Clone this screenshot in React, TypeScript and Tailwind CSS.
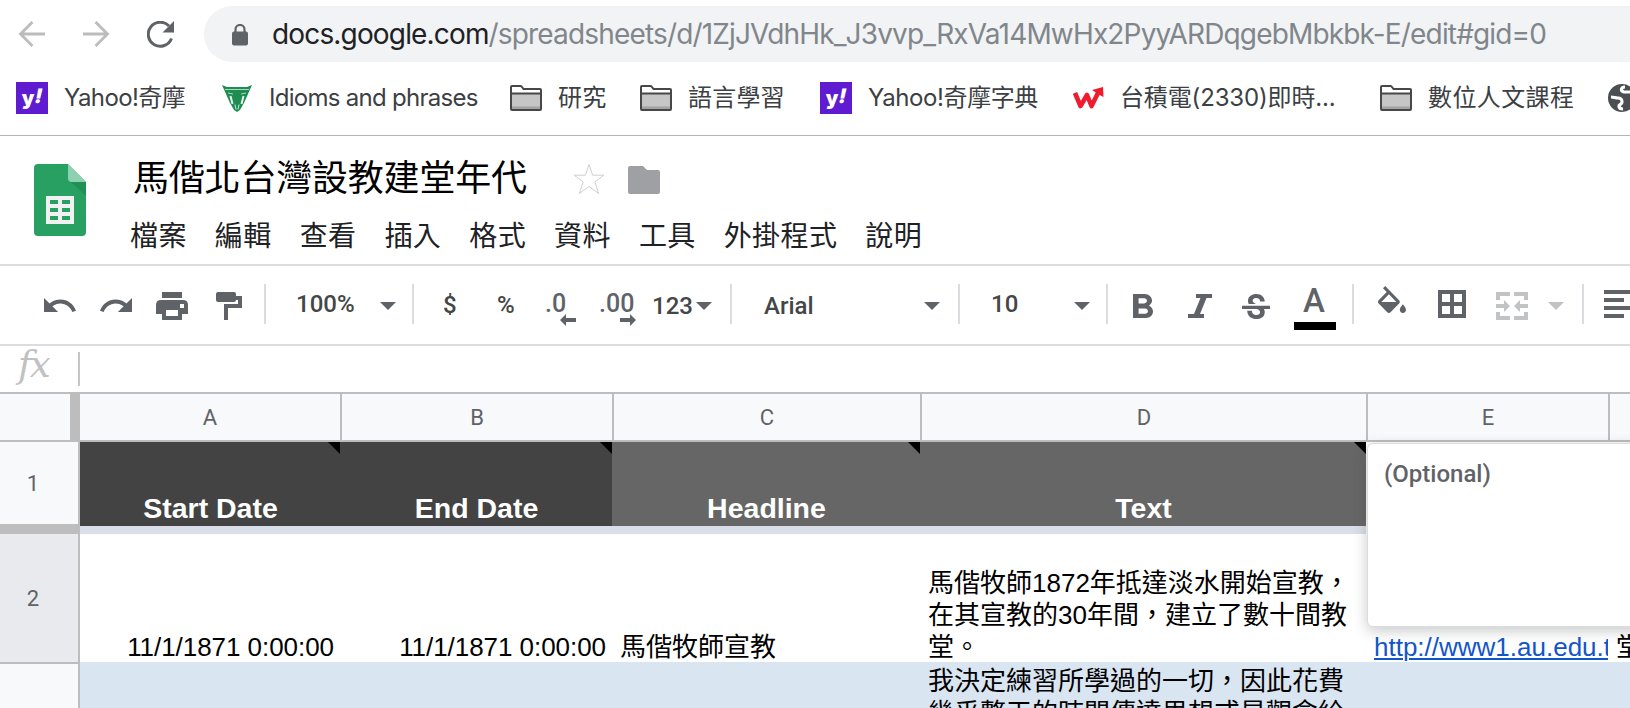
import type { ReactNode } from "react";
import { MdFormatBold, MdStrikethroughS } from "react-icons/md";

const menus = ["檔案", "編輯", "查看", "插入", "格式", "資料", "工具", "外掛程式", "說明"];

export default function App() {

    return <div className="h-[708px] w-[1630px] overflow-hidden bg-white flex flex-col font-['Roboto','Noto_Sans_CJK_TC',sans-serif]" lang="zh-Hant">
        <AddressBar />
        <Bookmarks />
        <DocHeader />
        <Toolbar />
        <FormulaBar />
        <Sheet />
    </div>
}

function AddressBar() {

    return <div className="flex h-[68px] shrink-0 pt-1.5 pl-[18px]">
        <svg className="mt-[14px] h-7 w-7 shrink-0" viewBox="0 0 28 28" fill="none" stroke="#bbbcbe" strokeWidth="2.8">
            <path d="M27 14H3M14.500 2 2.500 14 14.500 26" />
        </svg>
        <svg className="ml-9 mt-[14px] h-7 w-7 shrink-0" viewBox="0 0 28 28" fill="none" stroke="#bbbcbe" strokeWidth="2.8">
            <path d="M1 14h24M13.500 2l12 12-12 12" />
        </svg>
        <svg className="ml-[37px] mt-[15px] h-[27px] w-7 shrink-0" viewBox="0 0 28 27">
            <path d="M24.500 17.500A12 12 0 1 1 22 5" fill="none" stroke="#5f6368" strokeWidth="3" />
            <path d="M27 0v11.500H15.500z" fill="#5f6368" />
        </svg>
        <div className="ml-[29px] flex h-14 w-[1460px] shrink-0 rounded-l-full bg-[#f1f3f4] pl-7">
            <svg className="mt-[18px] h-[23px] w-4 shrink-0" viewBox="0 0 16 23">
                <path d="M3.500 9V5.500a4.500 4.500 0 0 1 9 0V9" fill="none" stroke="#5f6368" strokeWidth="2.200" />
                <rect y="7.500" width="16" height="14" rx="2" fill="#5f6368" />
            </svg>
            <span className="ml-6 whitespace-nowrap font-['Inter'] text-[28px] leading-[57px] tracking-[-0.84px] text-[#202124]">
                docs.google.com<span className="text-[#80868b]">/spreadsheets/d/1ZjJVdhHk_J3vvp_RxVa14MwHx2PyyARDqgebMbkbk-E/edit#gid=0</span>
            </span>
        </div>
    </div>
}

function Bookmarks() {

    return <div className="flex h-[68px] shrink-0 items-start border-b border-[#b4b4b4] pl-4 pt-3.5">
        <Bookmark className="w-[205px] tracking-[-0.6px]" icon={<YahooIcon />} label="Yahoo!奇摩" />
        <Bookmark className="w-[289px] tracking-[-0.72px]" icon={<CrestIcon />} label="Idioms and phrases" />
        <Bookmark className="w-[130px] tracking-[0.3px]" icon={<FolderIcon />} label="研究" />
        <Bookmark className="w-[180px] tracking-[0.2px]" icon={<FolderIcon />} label="語言學習" />
        <Bookmark className="w-[252px] tracking-[-0.4px]" icon={<YahooIcon />} label="Yahoo!奇摩字典" />
        <Bookmark className="w-[308px] tracking-[-0.15px]" icon={<WantgooIcon />} label="台積電(2330)即時..." />
        <Bookmark className="w-[228px] tracking-[0.4px]" icon={<FolderIcon />} label="數位人文課程" />
        <svg className="mt-0.5 h-7 w-7 shrink-0" viewBox="0 0 28 28">
            <circle cx="14" cy="14" r="14" fill="#4b4f54" />
            <path d="M3 13c3 0 4 1 7 1s4 1 4 4-3 2-3 4 1 3 4 3M17 3c-4 0-5 4-1 5l6 0" fill="none" stroke="#fff" strokeWidth="3.200" />
        </svg>
    </div>
}

function Bookmark({ icon, label, className }:{ icon:ReactNode, label:string, className:string }) {

    return <div className={`flex shrink-0 ${className}`}>
        <span className="flex h-8 w-8 shrink-0 items-center justify-center">{icon}</span>
        <span className="ml-4 whitespace-nowrap font-['Inter','Noto_Sans_CJK_TC'] text-2xl leading-8 text-[#3c4043]">{label}</span>
    </div>
}

function YahooIcon() {

    return <span className="flex h-8 w-8 items-center justify-center bg-[#5f1bd0] font-['Inter'] text-xl font-black leading-none tracking-normal text-white">
        <span>y</span>
        <span className="-mt-1 -skew-x-12">!</span>
    </span>
}

function CrestIcon() {

    return <svg className="-ml-px h-[27px] w-[30px]" viewBox="0 0 30 27">
        <path d="M0 0l5 2h20l5-2-4 9-4 9-4 7-3 2-3-2-4-7-4-9z" fill="#1f8c52" />
        <path d="M3 4.500l24 0M6 8l5 1M24 8l-5 1" stroke="#a9d8be" strokeWidth="1" fill="none" />
        <path d="M8.500 11l2 8M21.500 11l-2 8" stroke="#e6f4ec" strokeWidth="2" fill="none" />
        <path d="M13 19.500l1 5M17 19.500l-1 5" stroke="#b5dcc7" strokeWidth="1.200" />
    </svg>
}

function FolderIcon() {

    return <svg className="h-[26px] w-8" viewBox="0 0 32 26">
        <path d="M1 24V2q0-1 1-1h8.500q1 0 1.500 1l1.500 2H30q1 0 1 1v19q0 1-1 1H2q-1 0-1-1z" fill="#fff" stroke="#474747" strokeWidth="2" />
        <path d="M2 9h28v15H2z" fill="#c6c6c6" />
        <path d="M2 21.500h28V24H2z" fill="#a3a3a3" />
        <path d="M1 8.500h30" stroke="#474747" strokeWidth="2" />
    </svg>
}

function WantgooIcon() {

    return <svg className="h-[22px] w-[31px]" viewBox="0 0 31 22">
        <path d="M2 6l5.500 13L14 8l4.500 11L26 4" fill="none" stroke="#ee1c2e" strokeWidth="4.600" strokeLinejoin="round" />
        <path d="M19 3l11-3 .5 10-4-2z" fill="#ee1c2e" />
    </svg>
}

function DocHeader() {

    return <div className="flex h-[130px] shrink-0 border-b-2 border-[#dadce0] pl-[34px]">
        <svg className="mt-7 h-[72px] w-[52px] shrink-0" viewBox="0 0 52 72">
            <path d="M4 0h30l18 18v50q0 4-4 4H4q-4 0-4-4V4q0-4 4-4z" fill="#28a062" />
            <path d="M37 18h15v14z" fill="#219055" />
            <path d="M34 0l18 18H38q-4 0-4-4z" fill="#8ed1b1" />
            <path d="M12 32h28v28H12z" fill="#f1f1f1" />
            <path d="M16 36h8v4h-8zm12 0h8v4h-8zM16 44h8v4h-8zm12 0h8v4h-8zM16 52h8v4h-8zm12 0h8v4h-8z" fill="#28a062" />
        </svg>
        <div className="ml-11 flex flex-col">
            <div className="flex h-[74px] pl-[3px]">
                <span className="mt-[19px] w-[440px] whitespace-nowrap text-[36px] leading-[48px] tracking-[-0.2px] text-black">馬偕北台灣設教建堂年代</span>
                <svg className="mt-[27px] h-8 w-8" viewBox="0 0 32 32" fill="none" stroke="#cfcfcf" strokeWidth="1">
                    <path d="M16 1.500l3.600 10.700h11.300l-9.100 6.700 3.900 11.600L16 23.500l-9.700 7 3.900-11.600-9.100-6.700h11.300z" />
                </svg>
                <svg className="ml-[23px] mt-[30px] h-7 w-8" viewBox="0 0 32 28">
                    <path d="M2 0h13l4 4h11q2 0 2 2v20q0 2-2 2H2q-2 0-2-2V2q0-2 2-2z" fill="#9fa0a4" />
                </svg>
            </div>
            <div className="flex gap-7 text-[28px] leading-[54px] tracking-[0.4px] text-[#202124]">
                {menus.map((menu) => <span key={menu} className="whitespace-nowrap pt-px">{menu}</span>)}
            </div>
        </div>
    </div>
}

function Caret({ className }:{ className:string }) {

    return <svg className={`mt-9 h-2 w-4 shrink-0 ${className}`} viewBox="0 0 16 8" fill="currentColor">
        <path d="M0 0h16L8 8z" />
    </svg>
}

function Divider({ className }:{ className:string }) {

    return <span className={`mt-[18px] h-10 w-0.5 shrink-0 bg-[#dadce0] ${className}`} />
}

function Toolbar() {

    return <div className="flex h-20 shrink-0 items-start overflow-hidden whitespace-nowrap border-b-2 border-[#dadce0] pl-11 text-2xl font-medium leading-[34px] text-[#5f6368]">
        <svg className="mt-8 h-[14px] w-8 shrink-0" viewBox="2 7 20.470 9" preserveAspectRatio="none" fill="currentColor">
            <path d="M12.500 8c-2.650 0-5.050.99-6.900 2.600L2 7v9h9l-3.620-3.620c1.390-1.160 3.160-1.880 5.120-1.880 3.540 0 6.550 2.310 7.600 5.500l2.370-.78C21.080 11.030 17.150 8 12.500 8z" />
        </svg>
        <svg className="ml-6 mt-8 h-[14px] w-8 shrink-0 -scale-x-100" viewBox="2 7 20.470 9" preserveAspectRatio="none" fill="currentColor">
            <path d="M12.500 8c-2.650 0-5.050.99-6.900 2.600L2 7v9h9l-3.620-3.620c1.390-1.160 3.160-1.880 5.120-1.880 3.540 0 6.550 2.310 7.600 5.500l2.370-.78C21.080 11.030 17.150 8 12.500 8z" />
        </svg>
        <svg className="ml-6 mt-[26px] h-7 w-8 shrink-0" viewBox="0 0 32 28" fill="currentColor" fillRule="evenodd">
            <path d="M6 0h20v6H6zM5 8h22q5 0 5 5v9h-6v6H6v-6H0v-9q0-5 5-5zm5 10v6h12v-6zm14-6v4h4v-4z" />
        </svg>
        <svg className="ml-7 mt-[26px] h-7 w-[26px] shrink-0" viewBox="0 0 26 28" fill="currentColor">
            <path d="M2 0h16q2 0 2 2v2h6v12H12v12H8V12h14V8h-2q0 2-2 2H2q-2 0-2-2V2q0-2 2-2z" />
        </svg>
        <Divider className="ml-[22px]" />
        <span className="ml-[30px] mt-[21px] w-[84px] shrink-0 text-[#444746]">100%</span>
        <Caret className="" />
        <Divider className="ml-4" />
        <span className="ml-[29px] mt-[22px] w-[54px] shrink-0 text-[#444746]">$</span>
        <span className="mt-[22px] w-12 shrink-0 text-[#444746]">%</span>
        <span className="flex h-[60px] w-[54px] shrink-0 flex-col pt-[21px]">
            <span className="h-[27px] text-[25px]">.0</span>
            <svg className="ml-[15px] h-3 w-4" viewBox="0 0 16 12" fill="currentColor"><path d="M0 6l6-6v4h10v4H6v4z" /></svg>
        </span>
        <span className="flex h-[60px] w-[53px] shrink-0 flex-col pt-[21px]">
            <span className="h-[27px] text-[25px]">.00</span>
            <svg className="ml-[21px] h-3 w-4" viewBox="0 0 16 12" fill="currentColor"><path d="M16 6l-6-6v4H0v4h10v4z" /></svg>
        </span>
        <span className="mt-[23px] w-11 shrink-0 text-[#444746]">123</span>
        <Caret className="" />
        <Divider className="ml-[18px]" />
        <span className="ml-8 mt-[23px] w-[160px] shrink-0 text-[#444746]">Arial</span>
        <Caret className="" />
        <Divider className="ml-[18px]" />
        <span className="ml-[31px] mt-[21px] w-[83px] shrink-0 text-[#444746]">10</span>
        <Caret className="" />
        <Divider className="ml-4" />
        <MdFormatBold className="ml-[25px] mt-7 h-6 w-5 shrink-0" viewBox="7 4 10.75 14" preserveAspectRatio="none" />
        <svg className="ml-[35px] mt-7 h-6 w-6 shrink-0" viewBox="0 0 24 24" fill="currentColor">
            <path d="M8 0h16v4h-5.500l-6.500 16h4v4H0v-4h6l6.500-16H8z" />
        </svg>
        <MdStrikethroughS className="ml-[30px] mt-7 h-[25px] w-7 shrink-0" viewBox="3 3 18 15.020" preserveAspectRatio="none" />
        <span className="ml-6 mt-[22px] flex h-[42px] w-[42px] shrink-0 flex-col items-center">
            <span className="-ml-0.5 h-[34px] text-[33px] leading-[26px]">A</span>
            <span className="h-2 w-[42px] bg-black" />
        </span>
        <Divider className="ml-4" />
        <svg className="ml-6 mt-5 h-[27px] w-7 shrink-0" viewBox="3 0 18 17" preserveAspectRatio="none" fill="currentColor">
            <path d="M16.560 8.940L7.620 0 6.210 1.410l2.380 2.380-5.150 5.150a1.490 1.490 0 0 0 0 2.120l5.500 5.500c.29.29.68.44 1.060.44s.77-.15 1.060-.44l5.500-5.500c.59-.58.59-1.530 0-2.120zM5.210 10L10 5.210 14.790 10H5.210zM19 11.500s-2 2.170-2 3.500c0 1.100.9 2 2 2s2-.9 2-2c0-1.330-2-3.500-2-3.500z" />
        </svg>
        <svg className="ml-8 mt-6 h-7 w-7 shrink-0" viewBox="0 0 28 28" fill="none" stroke="currentColor" strokeWidth="4">
            <path d="M2 2h24v24H2zM14 2v24M2 14h24" />
        </svg>
        <svg className="ml-[30px] mt-[26px] h-7 w-8 shrink-0" viewBox="0 0 32 28" fill="#c2c3c4">
            <path d="M0 0h14v4H4v4H0zM18 0h14v8h-4V4H18zM0 20h4v4h10v4H0zM28 20h4v8H18v-4h10zM0 12h8V8l6 6-6 6v-4H0zM32 12h-8V8l-6 6 6 6v-4h8z" />
        </svg>
        <Caret className="ml-5 text-[#c2c3c4]" />
        <Divider className="ml-[18px]" />
        <svg className="ml-[20px] mt-6 h-7 w-8 shrink-0" viewBox="0 0 32 28" fill="currentColor">
            <path d="M0 0h32v4H0zM0 8h20v4H0zM0 16h32v4H0zM0 24h20v4H0z" />
        </svg>
    </div>
}

function FormulaBar() {

    return <div className="flex h-12 shrink-0 border-b-2 border-[#bdbdbd]">
        <span className="w-[78px] pl-[18px] font-['DejaVu_Serif','Liberation_Serif',serif] text-[37px] italic leading-[37px] tracking-[-2px] text-[#c0c1c3]">fx</span>
        <span className="mt-1.5 h-[34px] w-0.5 bg-[#c6c6c6]" />
    </div>
}

function Sheet() {

    return <div className="relative flex flex-col">
        <div className="flex h-12 shrink-0 border-b-2 border-[#bdbdbd] bg-[#f8f9fb] text-[22px] leading-[47px] text-[#5f6368]">
            <span className="w-20 shrink-0 border-r-[10px] border-[#bdbdbd]" />
            <ColumnHead className="w-[262px]" name="A" />
            <ColumnHead className="w-[272px]" name="B" />
            <ColumnHead className="w-[308px]" name="C" />
            <ColumnHead className="w-[446px]" name="D" />
            <ColumnHead className="w-[242px]" name="E" />
        </div>
        <div className="flex h-[92px] shrink-0">
            <RowHead className="border-b-[10px] bg-[#f8f9fb] leading-[83px]" name="1" />
            <TitleCell className="w-[260px] bg-[#434343]" text="Start Date" />
            <TitleCell className="w-[272px] bg-[#434343]" text="End Date" />
            <TitleCell className="w-[308px] bg-[#666666]" text="Headline" />
            <TitleCell className="w-[446px] bg-[#666666]" text="Text" />
        </div>
        <div className="flex h-32 shrink-0 items-end font-['Liberation_Sans','Noto_Sans_CJK_TC'] text-[26px] leading-8 text-black">
            <RowHead className="bg-[#e8eaed] leading-[130px]" name="2" />
            <span className="-mb-px w-[260px] shrink-0 pr-1.5 text-right tracking-[-0.05px]">11/1/1871 0:00:00</span>
            <span className="-mb-px w-[272px] shrink-0 pr-1.5 text-right tracking-[-0.05px]">11/1/1871 0:00:00</span>
            <span className="-mb-px w-[308px] shrink-0 pl-2">馬偕牧師宣教</span>
            <span className="-mb-px w-[446px] shrink-0 whitespace-nowrap pl-2">
                馬偕牧師1872年抵達淡水開始宣教，<br />在其宣教的30年間，建立了數十間教<br />堂。
            </span>
            <span className="-mb-px ml-2 w-[234px] shrink-0 overflow-hidden whitespace-nowrap text-[#1155cc] underline decoration-2 underline-offset-2">http://www1.au.edu.tw</span>
            <span className="-mb-px shrink-0 pl-2">堂</span>
        </div>
        <div className="flex h-[120px] shrink-0 bg-[#d9e5f0] font-['Liberation_Sans','Noto_Sans_CJK_TC'] text-[26px] leading-8 text-black">
            <RowHead className="border-t-2 bg-[#f8f9fb]" name="" />
            <span className="ml-[840px] whitespace-nowrap pl-2 pt-[3px]">
                我決定練習所學過的一切，因此花費<br />幾乎整天的時間傳達思想或是觀念給
            </span>
        </div>
        {/* note of the cell E1 */}
        <div className="absolute left-[1367px] top-[49px] h-[184px] w-[300px] rounded-md border border-[#dcdddd] bg-white pl-4 pt-[13px] text-2xl font-medium leading-[34px] text-[#5f6368] shadow-[0_4px_14px_rgba(60,64,67,0.28)]">
            (Optional)
        </div>
    </div>
}

function ColumnHead({ name, className }:{ name:string, className:string }) {

    return <span className={`shrink-0 border-r-2 border-[#bdbdbd] text-center ${className}`}>{name}</span>
}

function RowHead({ name, className }:{ name:string, className:string }) {

    return <span className={`h-full w-20 shrink-0 border-r-2 border-[#bdbdbd] pr-3 text-center font-['Roboto'] text-[22px] text-[#5f6368] ${className}`}>{name}</span>
}

function TitleCell({ text, className }:{ text:string, className:string }) {

    return <div className={`relative flex shrink-0 items-end justify-center border-b-8 border-[#dadee8] pl-px font-['Liberation_Sans'] text-[28.5px] font-bold leading-9 text-white ${className}`}>
        {text}
        <svg className="absolute right-0 top-0 h-3 w-3" viewBox="0 0 12 12"><path d="M0 0h12v12z" /></svg>
    </div>
}
